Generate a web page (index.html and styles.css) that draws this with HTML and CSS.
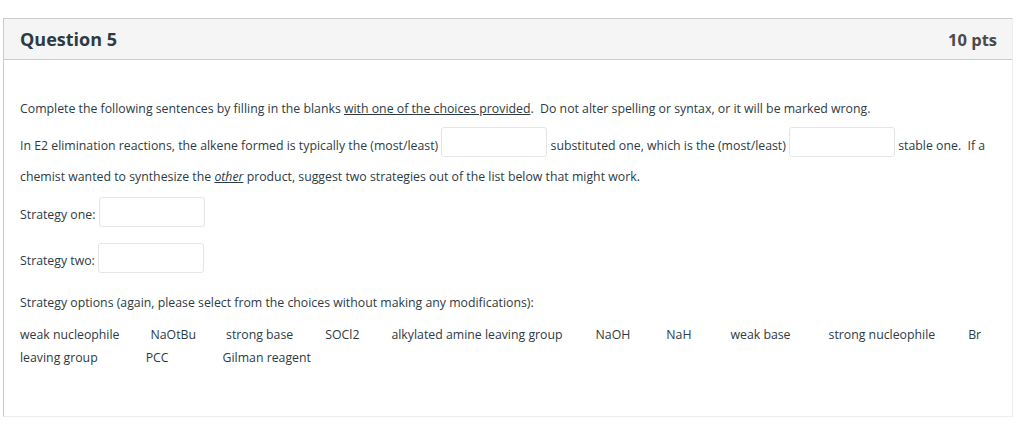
FILE: index.html
```html
<!DOCTYPE html>
<html lang="en">
<head>
<meta charset="utf-8">
<title>Question 5</title>
<link rel="stylesheet" href="styles.css">
</head>
<body>
<div class="question">
  <div class="q-header">
    <h2 class="q-title">Question 5</h2>
    <span class="q-points">10 pts</span>
  </div>
  <div class="q-body">
    <p class="intro">Complete the following sentences by filling in the blanks <u>with one of the choices provided</u>.&nbsp; Do not alter spelling or syntax, or it will be marked wrong.</p>
    <p class="sentence">In E2 elimination reactions, the alkene formed is typically the (most/least) <input class="blank" type="text" aria-label="blank 1"> substituted one, which is the (most/least) <input class="blank" type="text" aria-label="blank 2"> stable one.&nbsp; If a chemist wanted to synthesize the <em><u>other</u></em> product, suggest two strategies out of the list below that might work.</p>
    <p class="strategy">Strategy one: <input class="blank" type="text" aria-label="strategy one"></p>
    <p class="strategy two">Strategy two: <input class="blank" type="text" aria-label="strategy two"></p>
    <p class="options-label">Strategy options (again, please select from the choices without making any modifications):</p>
    <p class="options"><span class="opt g31">weak nucleophile</span><span class="opt g30">NaOtBu</span><span class="opt g32">strong base</span><span class="opt g32">SOCl2</span><span class="opt g33">alkylated amine leaving group</span><span class="opt g36">NaOH</span><span class="opt g39">NaH</span><span class="opt g38">weak base</span><span class="opt g33">strong nucleophile</span><span class="opt">Br</span> <span class="opt g48">leaving group</span><span class="opt g54">PCC</span><span class="opt">Gilman reagent</span></p>
  </div>
</div>
</body>
</html>
```
FILE: styles.css
```css
html, body {
  margin: 0;
  padding: 0;
  background: #ffffff;
}

body {
  font-family: "Open Sans", "Liberation Sans", sans-serif;
  color: #2d3b45;
}

.question {
  margin: 18px 0 0 3px;
  width: 1010px;
  height: 399px;
  box-sizing: border-box;
  border-top: 1px solid #c7cdd1;
  border-left: 1px solid #c7cdd1;
  border-right: 1px solid #eceff1;
  border-bottom: 1px solid #eceff1;
}

.q-header {
  display: flex;
  justify-content: space-between;
  align-items: center;
  height: 40px;
  padding: 0 15px 0 16px;
  background: #f5f5f5;
  border-bottom: 1px solid #c7cdd1;
}

.q-title {
  margin: 0;
  font-size: 18px;
  font-weight: 700;
  color: #2d3b45;
}

.q-points {
  font-size: 16.5px;
  font-weight: 700;
  color: #4a4a4a;
}

.q-body {
  padding: 40px 16px 0 16px;
  font-size: 12.3px;
  line-height: 18px;
}

.q-body p {
  margin: 0;
}

.intro {
  margin-bottom: 9px !important;
}

.sentence {
  line-height: 31px;
}

.blank {
  box-sizing: border-box;
  width: 106px;
  height: 30px;
  margin: 0;
  padding: 0 6px;
  border: 1px solid #e3e6e8;
  border-radius: 3px;
  background: #ffffff;
  vertical-align: 3px;
  font: inherit;
  font-size: 12px;
}

.strategy {
  margin-top: 5px !important;
  line-height: 32px;
}

.strategy.two {
  margin-top: 12px !important;
}

.options-label {
  margin-top: 17px !important;
}

.options {
  margin-top: 11px !important;
  line-height: 23px;
}

.opt.g30 { margin-right: 30px; }
.opt.g31 { margin-right: 31px; }
.opt.g32 { margin-right: 32px; }
.opt.g33 { margin-right: 33px; }
.opt.g36 { margin-right: 36px; }
.opt.g38 { margin-right: 38px; }
.opt.g39 { margin-right: 39px; }
.opt.g48 { margin-right: 48px; }
.opt.g54 { margin-right: 54px; }
```
